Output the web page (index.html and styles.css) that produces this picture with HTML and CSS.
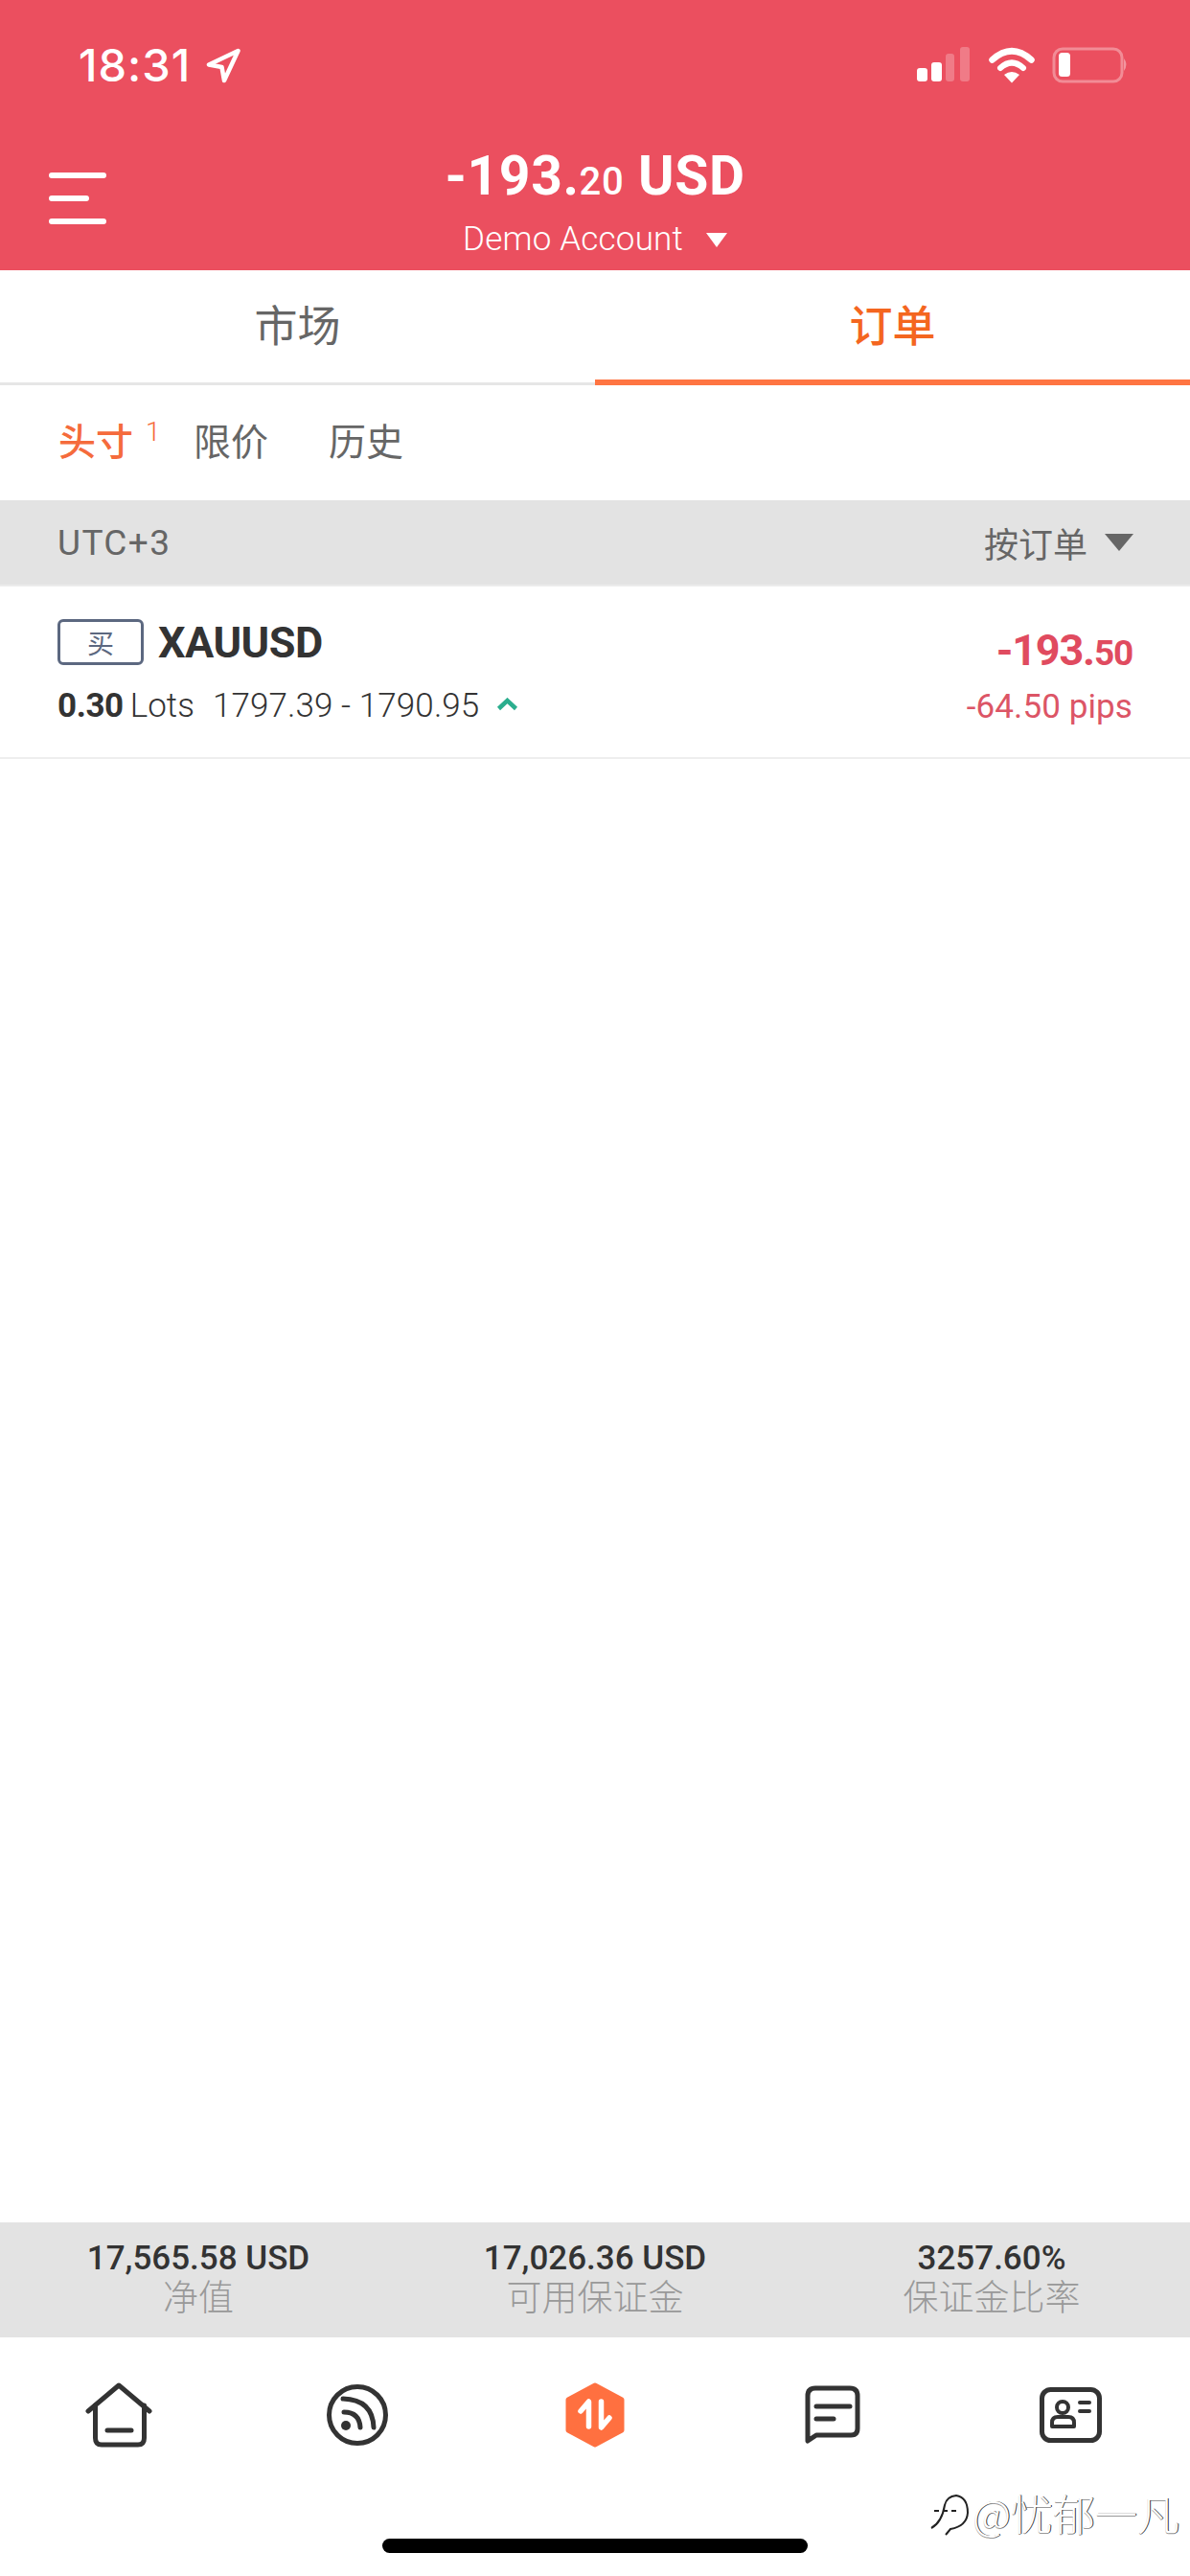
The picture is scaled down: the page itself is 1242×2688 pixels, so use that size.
FILE: index.html
```html
<!DOCTYPE html>
<html lang="zh-CN">
<head>
<meta charset="utf-8">
<title>订单</title>
<link rel="stylesheet" href="styles.css">
</head>
<body>
<div class="app">
  <header class="header">
    <div class="status">
      <div class="status-left">
        <span class="time">18:31</span>
        <svg class="loc" width="36" height="37" viewBox="0 0 36 37"><path d="M33.500 3 L3 17.500 L16.500 20 L19 34 Z" fill="none" stroke="#fff" stroke-width="4.5" stroke-linejoin="round"/></svg>
      </div>
      <div class="status-right">
        <svg class="signal" width="55" height="36" viewBox="0 0 55 36"><rect x="0" y="22" width="11" height="14" rx="3" fill="#fff"/><rect x="15" y="16" width="11" height="20" rx="3" fill="#fff"/><rect x="30" y="7" width="9" height="29" rx="3" fill="#fff" fill-opacity=".25"/><rect x="45" y="0" width="10" height="36" rx="3" fill="#fff" fill-opacity=".25"/></svg>
        <svg width="48" height="38" viewBox="0 0 48 38"><path d="M3.500 13.500 Q24 -5 44.500 13.500" fill="none" stroke="#fff" stroke-width="6.500" stroke-linecap="round"/><path d="M12 22 Q24 11 36 22" fill="none" stroke="#fff" stroke-width="6" stroke-linecap="round"/><path d="M24 37.500 L16 29 Q24 23 32 29 Z" fill="#fff"/></svg>
        <svg width="80" height="38" viewBox="0 0 80 38"><rect x="2" y="2" width="71" height="34" rx="9" fill="none" stroke="#fff" stroke-opacity=".35" stroke-width="3"/><rect x="7" y="6" width="12" height="25" rx="3.500" fill="#fff"/><path d="M75 12 Q80 18 75 25 Z" fill="#fff" fill-opacity=".4"/></svg>
      </div>
    </div>
    <div class="titlebar">
      <div class="menu"><i class="menu-long"></i><i class="menu-short"></i><i class="menu-long"></i></div>
      <div class="title">
        <div class="balance">-193.<small>20</small> USD</div>
        <div class="account">Demo Account<i class="tri tri-white"></i></div>
      </div>
    </div>
  </header>

  <nav class="tabs">
    <div class="tab">市场</div>
    <div class="tab tab-active">订单</div>
  </nav>

  <div class="subtabs">
    <div class="subtab subtab-active">头寸<sup>1</sup></div>
    <div class="subtab">限价</div>
    <div class="subtab">历史</div>
  </div>

  <div class="groupbar">
    <span class="utc">UTC+3</span>
    <span class="sort">按订单<i class="tri tri-gray"></i></span>
  </div>

  <main class="list">
    <div class="order">
      <div class="order-left">
        <div class="order-head"><span class="badge">买</span><span class="symbol">XAUUSD</span></div>
        <div class="order-meta"><b>0.30</b><span class="lots">Lots</span><span class="prices">1797.39 - 1790.95</span>
          <svg class="chev" width="23" height="14" viewBox="0 0 23 14"><path d="M2.500 11.500 L11.500 3 L20.500 11.500" fill="none" stroke="#2bae8e" stroke-width="4.500"/></svg>
        </div>
      </div>
      <div class="order-right">
        <div class="pnl">-193.<small>50</small></div>
        <div class="pips">-64.50 pips</div>
      </div>
    </div>
  </main>

  <section class="summary">
    <div class="stat"><div class="stat-value">17,565.58 USD</div><div class="stat-label">净值</div></div>
    <div class="stat"><div class="stat-value">17,026.36 USD</div><div class="stat-label">可用保证金</div></div>
    <div class="stat"><div class="stat-value">3257.60%</div><div class="stat-label">保证金比率</div></div>
  </section>

  <footer class="bottom">
    <div class="nav">
      <div class="nav-item">
        <svg width="70" height="68" viewBox="0 0 70 68" fill="none" stroke="#333" stroke-width="5" stroke-linecap="round" stroke-linejoin="round"><path d="M3 30 L35 3 L67 30"/><path d="M10.500 24 V58 Q10.500 65 17 65 H55 Q61.500 65 61.500 58 V24"/><path d="M23 50 H48"/></svg>
      </div>
      <div class="nav-item">
        <svg width="64" height="64" viewBox="0 0 64 64" fill="none" stroke="#333" stroke-width="5" stroke-linecap="round"><circle cx="32" cy="32" r="29.500"/><path d="M18 29 Q34 29 35 45"/><path d="M17 15 Q48 16 49 45"/><circle cx="20" cy="43" r="5" fill="#333" stroke="none"/></svg>
      </div>
      <div class="nav-item">
        <svg width="62" height="68" viewBox="0 0 62 68"><path d="M31 3 L59 18 V50 L31 65 L3 50 V18 Z" fill="#ff7040" stroke="#ff7040" stroke-width="5" stroke-linejoin="round"/><path d="M16 30 L24.500 20 V46" fill="none" stroke="#fff" stroke-width="5.500" stroke-linecap="round" stroke-linejoin="round"/><path d="M46 37 L37.500 47 V20" fill="none" stroke="#fff" stroke-width="5.500" stroke-linecap="round" stroke-linejoin="round"/></svg>
      </div>
      <div class="nav-item">
        <svg width="58" height="62" viewBox="0 0 58 62" fill="none" stroke="#333" stroke-width="5" stroke-linecap="round" stroke-linejoin="round"><path d="M3 58 V11 Q3 3 11 3 H47 Q55 3 55 11 V45 Q55 52 48 52 H12 Z"/><path d="M12 22 H47"/><path d="M12 35 H30"/></svg>
      </div>
      <div class="nav-item">
        <svg width="65" height="58" viewBox="0 0 65 58" fill="none" stroke="#333" stroke-width="5" stroke-linecap="round" stroke-linejoin="round"><rect x="2.500" y="2.500" width="60" height="53" rx="9"/><circle cx="24" cy="21" r="6" stroke-width="4"/><path d="M13 41 V37 Q13 31 19 31 H30 Q36 31 36 37 V41 Z" stroke-width="4"/><path d="M42 16 H52 M42 25 H52" stroke-width="4"/></svg>
      </div>
    </div>
    <div class="home-indicator"></div>
    <div class="watermark">
      <svg width="46" height="48" viewBox="0 0 46 48" fill="none" stroke="#222" stroke-width="2"><path d="M4 40 Q15 34 18 16 Q20 7 30 6 Q42 8 42 24 Q41 38 24 41 L19 47"/><path d="M7 22 H30" stroke-dasharray="5 4"/></svg>
      <span class="watermark-text">@忧郁一凡</span>
    </div>
  </footer>
</div>
</body>
</html>
```
FILE: styles.css
```css
* { box-sizing: border-box; }
html, body { margin: 0; padding: 0; background: #fff; }
i { display: block; font-style: normal; }
.app {
  width: 1242px;
  height: 2688px;
  display: flex;
  flex-direction: column;
  font-family: Roboto, "Noto Sans CJK SC", sans-serif;
  color: #333;
  overflow: hidden;
}

/* header */
.header { background: #eb4f5f; height: 282px; color: #fff; }
.status {
  height: 148px;
  padding: 49px 64px 0 82px;
  display: flex;
  justify-content: space-between;
  align-items: flex-start;
}
.status-left { display: flex; align-items: center; height: 38px; gap: 16px; }
.time { font-size: 47px; font-weight: 500; line-height: 38px; font-family: Inter, Roboto, sans-serif; letter-spacing: 1px; }
.status-right { display: flex; align-items: flex-start; gap: 18px; }
.signal { margin-right: 2px; }
.titlebar {
  display: grid;
  grid-template-columns: 1fr auto 1fr;
  align-items: start;
}
.menu { margin: 32px 0 0 51px; width: 60px; display: flex; flex-direction: column; gap: 18px; }
.menu-long { height: 6px; width: 60px; background: #fff; border-radius: 3px; }
.menu-short { height: 6px; width: 42px; background: #fff; border-radius: 3px; }
.title { grid-column: 2; text-align: center; padding-top: 5px; }
.balance { font-size: 57px; font-weight: 700; line-height: 62px; letter-spacing: .6px; }
.balance small { font-size: 40px; font-weight: 500; }
.account { font-size: 35px; line-height: 46px; letter-spacing: .2px; display: flex; justify-content: center; align-items: center; gap: 24px; margin-top: 6px; font-weight: 300; }
.tri { width: 0; height: 0; border-left: 11px solid transparent; border-right: 11px solid transparent; }
.tri-white { border-top: 15px solid #fff; }
.tri-gray { border-left-width: 15px; border-right-width: 15px; border-top: 18px solid #666; }

/* tabs */
.tabs { display: flex; height: 120px; border-bottom: 3px solid #e6e6e6; }
.tab {
  flex: 1;
  display: flex;
  align-items: center;
  justify-content: center;
  font-size: 45px;
  color: #666;
  padding-bottom: 7px;
}
.tab-active { color: #f4661f; font-weight: 500; border-bottom: 6px solid #ff7542; margin-bottom: -3px; padding-bottom: 3px; }

.subtabs { display: flex; height: 120px; padding: 0 0 0 61px; align-items: center; }
.subtab { width: 141px; font-size: 39px; color: #666; line-height: 44px; }
.subtab-active { color: #f56b3c; font-weight: 500; }
.subtab sup { font-size: 28px; font-weight: 300; line-height: 0; vertical-align: 15px; margin-left: 13px; }

.groupbar {
  height: 90px;
  padding: 0 59px 0 60px;
  background: #e3e3e3;
  display: flex;
  justify-content: space-between;
  align-items: center;
  color: #666;
  border-bottom: 2px solid #ececec;
}
.utc { font-size: 37px; letter-spacing: 1.4px; }
.sort { font-size: 36px; display: flex; align-items: center; gap: 18px; }

/* list */
.list { flex: 1; }
.order {
  height: 180px;
  border-bottom: 2px solid #eee;
  padding: 0 60px 0 60px;
  display: flex;
  justify-content: space-between;
}
.order-head { display: flex; align-items: center; margin-top: 34px; height: 48px; }
.badge {
  width: 90px;
  height: 48px;
  border: 3px solid #5c6880;
  border-radius: 6px;
  font-size: 28px;
  color: #5c6880;
  display: flex;
  align-items: center;
  justify-content: center;
}
.symbol { font-size: 45px; font-weight: 700; margin: 2px 0 0 15px; letter-spacing: -.5px; line-height: 48px; }
.order-meta { display: flex; align-items: center; height: 40px; margin-top: 22px; font-size: 35px; }
.order-meta b { font-weight: 700; letter-spacing: -.4px; }
.lots { margin-left: 7px; font-weight: 300; }
.prices { margin-left: 19px; font-weight: 300; letter-spacing: .1px; }
.chev { margin-left: 18px; margin-top: -3px; }
.order-right { text-align: right; color: #e04b5f; }
.pnl { font-size: 45px; font-weight: 700; line-height: 48px; margin-top: 43px; letter-spacing: -1.2px; }
.pnl small { font-size: 37px; font-weight: 700; }
.pips { font-size: 35px; line-height: 40px; margin-top: 12px; color: #dc5566; letter-spacing: .1px; }

/* summary */
.summary {
  height: 120px;
  background: #e3e3e3;
  display: grid;
  grid-template-columns: repeat(3, 1fr);
  text-align: center;
  padding-top: 18px;
}
.stat-value { font-size: 35px; line-height: 40px; font-weight: 500; }
.stat-label { font-size: 37px; line-height: 44px; color: #999; font-weight: 300; }

/* bottom nav */
.bottom { height: 249px; position: relative; }
.nav { display: grid; grid-template-columns: repeat(5, 1fr); height: 210px; align-items: start; padding-top: 47px; }
.nav-item { display: flex; justify-content: center; height: 68px; align-items: center; }
.home-indicator { width: 444px; height: 15px; background: #000; border-radius: 8px; margin: 0 auto; }
.watermark { position: absolute; left: 968px; top: 158px; display: flex; align-items: center; gap: 1px; }
.watermark-text {
  font-family: "Noto Sans CJK SC", sans-serif;
  font-size: 44px;
  line-height: 50px;
  font-weight: 300;
  color: #fff;
  text-shadow: 1px 0 0 #333, 0 1px 0 #999;
}
```
